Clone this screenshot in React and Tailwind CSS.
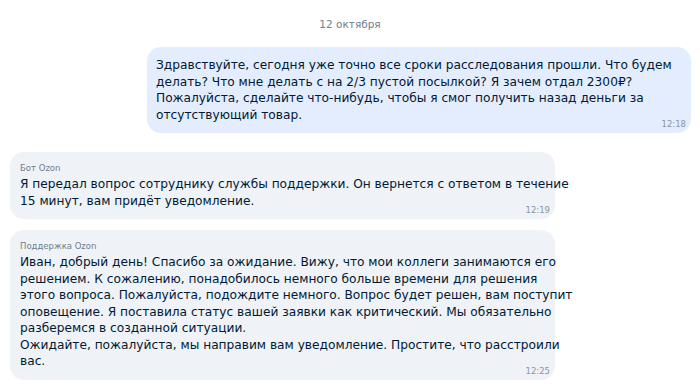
export default function App() {
  const font = { fontFamily: '"DejaVu Sans", "Noto Sans", Arial, sans-serif' };
  return (
    <div className="w-[700px] h-[387px] bg-white overflow-hidden text-[#001a34]" style={font}>
      <div className="flex flex-col pt-[17px]">
        <div className="text-center text-[10.5px] leading-[14px] text-[#707f8d]">12 октября</div>
        <div className="flex justify-end pr-[9px] mt-[16px]">
          <div className="w-[544px] rounded-[14px] bg-[#e4edfd] pl-[9px] pr-[5px] pt-[10px] pb-[3px]">
            <div className="text-[12.2px] leading-[16.5px] whitespace-nowrap">
              Здравствуйте, сегодня уже точно все сроки расследования прошли. Что будем<br />
              делать? Что мне делать с на 2/3 пустой посылкой? Я зачем отдал 2300₽?<br />
              Пожалуйста, сделайте что-нибудь, чтобы я смог получить назад деньги за<br />
              отсутствующий товар.
            </div>
            <div className="flex justify-end -mt-[5px] text-[8.5px] leading-[12px] text-[#8a96a3]">12:18</div>
          </div>
        </div>
        <div className="flex pl-[10px] mt-[19px]">
          <div className="w-[545px] rounded-[14px] bg-[#eff2f6] pl-[10px] pr-[5px] pt-[10px] pb-[3px]">
            <div className="text-[8.5px] leading-[12px] text-[#707f8d]">Бот Ozon</div>
            <div className="text-[12.2px] leading-[16.5px] whitespace-nowrap mt-[2px]">
              Я передал вопрос сотруднику службы поддержки. Он вернется с ответом в течение<br />
              15 минут, вам придёт уведомление.
            </div>
            <div className="flex justify-end -mt-[5px] text-[8.5px] leading-[12px] text-[#8a96a3]">12:19</div>
          </div>
        </div>
        <div className="flex pl-[10px] mt-[11px]">
          <div className="w-[545px] rounded-[14px] bg-[#eff2f6] pl-[10px] pr-[5px] pt-[10px] pb-[3px]">
            <div className="text-[8.5px] leading-[12px] text-[#707f8d]">Поддержка Ozon</div>
            <div className="text-[12.2px] leading-[16.5px] whitespace-nowrap mt-[2px]">
              Иван, добрый день! Спасибо за ожидание. Вижу, что мои коллеги занимаются его<br />
              решением. К сожалению, понадобилось немного больше времени для решения<br />
              этого вопроса. Пожалуйста, подождите немного. Вопрос будет решен, вам поступит<br />
              оповещение. Я поставила статус вашей заявки как критический. Мы обязательно<br />
              разберемся в созданной ситуации.<br />
              Ожидайте, пожалуйста, мы направим вам уведомление. Простите, что расстроили<br />
              вас.
            </div>
            <div className="flex justify-end -mt-[5px] text-[8.5px] leading-[12px] text-[#8a96a3]">12:25</div>
          </div>
        </div>
      </div>
    </div>
  );
}
